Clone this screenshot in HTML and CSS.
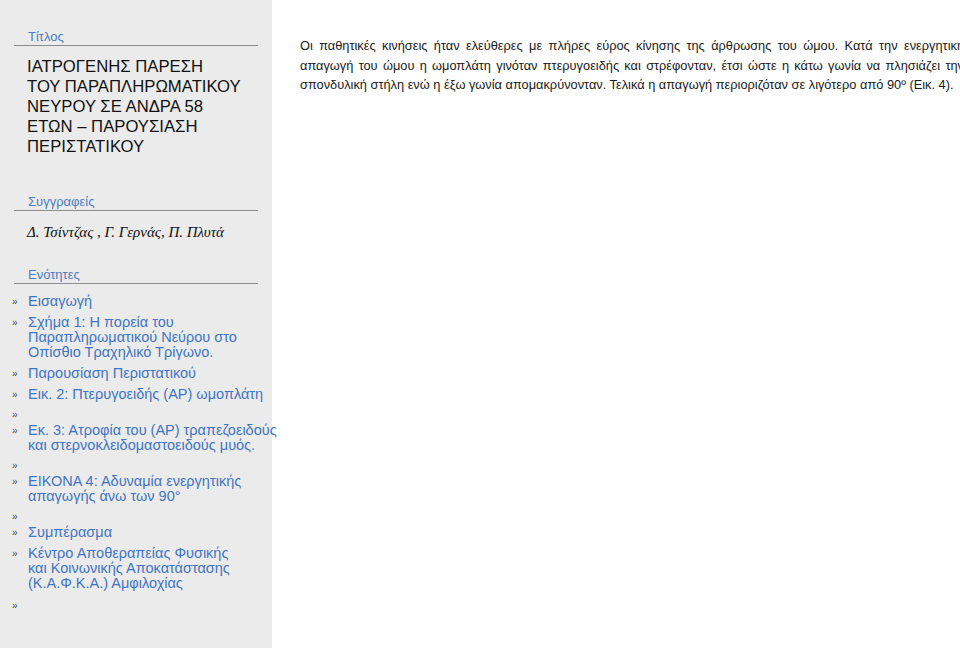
FILE: index.html
```html
<!DOCTYPE html>
<html>
<head>
    <title>Ιατρογενής πάρεση του παραπληρωματικού νεύρου</title>
    <link rel="stylesheet" href="styles.css">
</head>
<body>
    <div class="sidebar">
        <div class="label label-first">Τίτλος</div>
        <div class="title">ΙΑΤΡΟΓΕΝΗΣ ΠΑΡΕΣΗ<br>ΤΟΥ ΠΑΡΑΠΛΗΡΩΜΑΤΙΚΟΥ<br>ΝΕΥΡΟΥ ΣΕ ΑΝΔΡΑ 58<br>ΕΤΩΝ – ΠΑΡΟΥΣΙΑΣΗ<br>ΠΕΡΙΣΤΑΤΙΚΟΥ</div>

        <div class="label label-authors">Συγγραφείς</div>
        <div class="authors">Δ. Τσίντζας , Γ. Γερνάς, Π. Πλυτά</div>

        <div class="label label-sections">Ενότητες</div>
        <ul class="sections">
            <li><span class="bullet">»</span><span class="item">Εισαγωγή</span></li>
            <li><span class="bullet">»</span><span class="item">Σχήμα 1: Η πορεία του<br>Παραπληρωματικού Νεύρου στο<br>Οπίσθιο Τραχηλικό Τρίγωνο.</span></li>
            <li><span class="bullet">»</span><span class="item">Παρουσίαση Περιστατικού</span></li>
            <li><span class="bullet">»</span><span class="item">Εικ. 2: Πτερυγοειδής (ΑΡ) ωμοπλάτη</span></li>
            <li class="empty"><span class="bullet">»</span></li>
            <li><span class="bullet">»</span><span class="item">Εκ. 3: Ατροφία του (ΑΡ) τραπεζοειδούς<br>και στερνοκλειδομαστοειδούς μυός.</span></li>
            <li class="empty"><span class="bullet">»</span></li>
            <li><span class="bullet">»</span><span class="item">ΕΙΚΟΝΑ 4: Αδυναμία ενεργητικής<br>απαγωγής άνω των 90°</span></li>
            <li class="empty"><span class="bullet">»</span></li>
            <li><span class="bullet">»</span><span class="item">Συμπέρασμα</span></li>
            <li><span class="bullet">»</span><span class="item">Κέντρο Αποθεραπείας Φυσικής<br>και Κοινωνικής Αποκατάστασης<br>(Κ.Α.Φ.Κ.Α.) Αμφιλοχίας</span></li>
            <li class="empty"><span class="bullet">»</span></li>
        </ul>
    </div>

    <div class="content">
        <div class="text">
            <span class="line">Οι παθητικές κινήσεις ήταν ελεύθερες με πλήρες εύρος κίνησης της άρθρωσης του ώμου. Κατά την ενεργητική</span>
            <span class="line">απαγωγή του ώμου η ωμοπλάτη γινόταν πτερυγοειδής και στρέφονταν, έτσι ώστε η κάτω γωνία να πλησιάζει την</span>
            <span class="line line-last">σπονδυλική στήλη ενώ η έξω γωνία απομακρύνονταν. Τελικά η απαγωγή περιοριζόταν σε λιγότερο από 90º (Εικ. 4).</span>
        </div>
    </div>
</body>
</html>
```

FILE: styles.css
```css
body {
    margin: 0;
    height: 648px;
    display: flex;
    overflow: hidden;
    background: #ffffff;
    font-family: 'Liberation Sans', Arial, sans-serif;
}

.sidebar {
    width: 272px;
    flex-shrink: 0;
    background: #ebebeb;
    padding-top: 28px;
    box-sizing: border-box;
    position: relative;
    z-index: 1;
}

.label {
    margin: 0 14px;
    padding: 1px 14px 0;
    border-bottom: 1px solid #8c8c8c;
    color: #4a7cc4;
    font-size: 13px;
    line-height: 16px;
}

.title {
    margin: 11px 0 0 27px;
    color: #111;
    font-size: 16.7px;
    line-height: 20px;
    white-space: nowrap;
}

.label-authors {
    margin-top: 36px;
}

.authors {
    margin: 11px 0 0 27px;
    font-family: 'Liberation Serif', 'Times New Roman', serif;
    font-style: italic;
    font-size: 15px;
    line-height: 20px;
    color: #111;
}

.label-sections {
    margin-top: 24px;
}

.sections {
    list-style: none;
    margin: 7px 0 0;
    padding: 0;
}

.sections li {
    display: flex;
    align-items: flex-start;
    padding: 3px 0;
}

.bullet {
    width: 16px;
    flex-shrink: 0;
    padding-left: 12px;
    color: #4d4d4d;
    font-size: 10px;
    line-height: 15px;
}

.item {
    color: #3f75c6;
    font-size: 14.5px;
    line-height: 15px;
    white-space: nowrap;
}

.sections li.empty {
    padding: 2px 0 0;
    height: 13px;
}

.sections li.empty:last-child {
    padding-top: 4px;
}

.content {
    padding: 36px 0 0 28px;
    flex: 1;
    overflow: hidden;
}

.text {
    width: 664px;
    color: #1a1a1a;
    font-size: 12.8px;
    line-height: 19.5px;
}

.line {
    display: block;
    white-space: nowrap;
    text-align: justify;
    text-align-last: justify;
}

.line-last {
    text-align-last: left;
}
```
